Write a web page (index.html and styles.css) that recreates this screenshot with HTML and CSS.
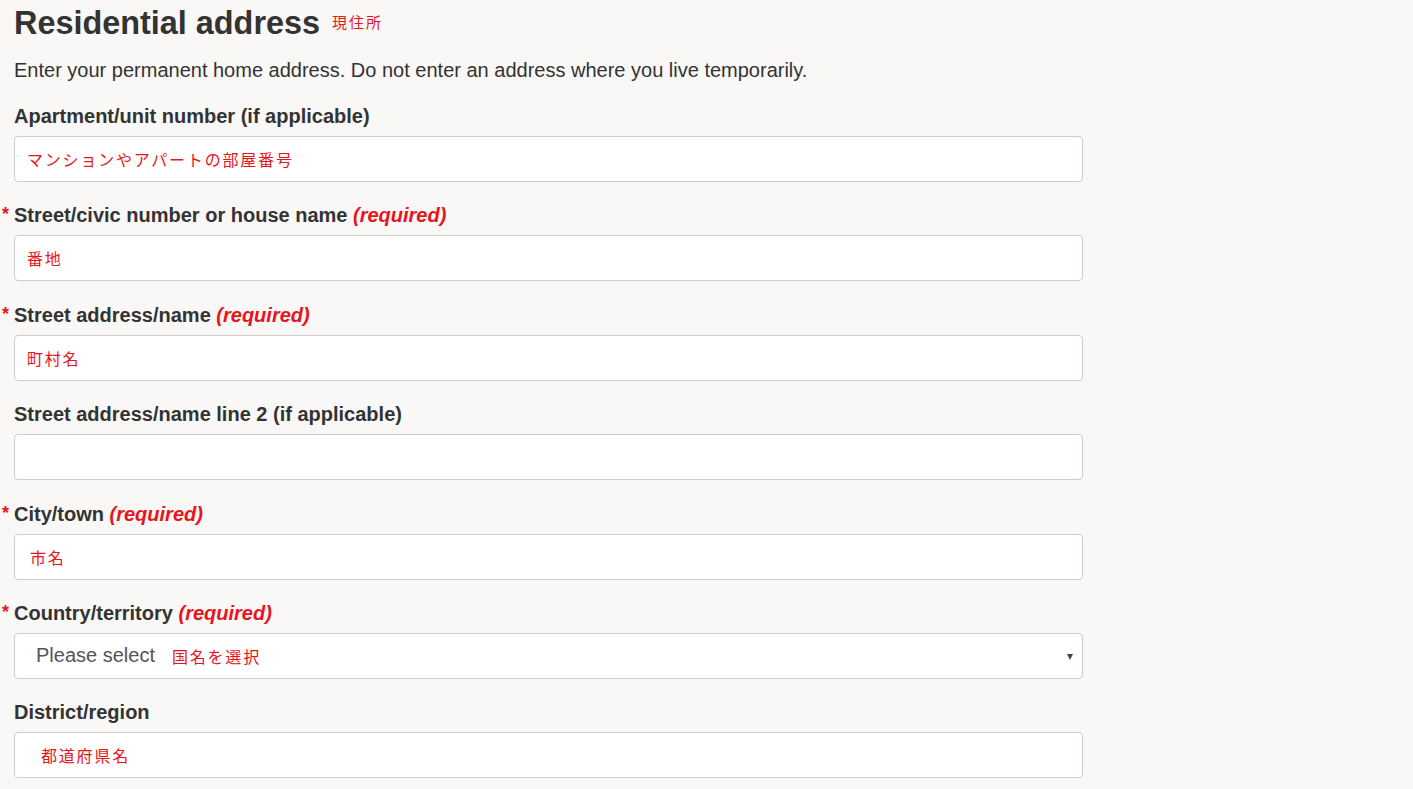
FILE: index.html
```html
<!DOCTYPE html>
<html lang="en">
<head>
<meta charset="utf-8">
<title>Residential address</title>
<link rel="stylesheet" href="styles.css">
</head>
<body>
<main class="page">
  <h1 class="title">Residential address <span class="jp jp-title">現住所</span></h1>
  <p class="intro">Enter your permanent home address. Do not enter an address where you live temporarily.</p>

  <div class="field">
    <label class="label">Apartment/unit number (if applicable)</label>
    <div class="input"><span class="jp">マンションやアパートの部屋番号</span></div>
  </div>

  <div class="field">
    <label class="label req">Street/civic number or house name <em class="required">(required)</em></label>
    <div class="input"><span class="jp">番地</span></div>
  </div>

  <div class="field">
    <label class="label req">Street address/name <em class="required">(required)</em></label>
    <div class="input"><span class="jp">町村名</span></div>
  </div>

  <div class="field">
    <label class="label">Street address/name line 2 (if applicable)</label>
    <div class="input"></div>
  </div>

  <div class="field">
    <label class="label req">City/town <em class="required">(required)</em></label>
    <div class="input"><span class="jp jp-city">市名</span></div>
  </div>

  <div class="field">
    <label class="label req">Country/territory <em class="required">(required)</em></label>
    <div class="input select"><span class="placeholder">Please select</span><span class="jp">国名を選択</span><span class="caret"></span></div>
  </div>

  <div class="field">
    <label class="label">District/region</label>
    <div class="input"><span class="jp jp-indent">都道府県名</span></div>
  </div>
</main>
</body>
</html>
```

FILE: styles.css
```css
html, body {
  margin: 0;
  padding: 0;
  background: #f9f8f7;
}
body {
  font-family: "Liberation Sans", Arial, sans-serif;
  color: #333;
}
.page {
  padding: 0 0 0 14px;
  width: 1069px;
}
.title {
  margin: 0;
  padding-top: 2px;
  font-size: 32.4px;
  line-height: 40px;
  font-weight: bold;
  color: #333;
}
.jp {
  font-family: "Noto Sans CJK JP", sans-serif;
  color: #e8141c;
  font-weight: normal;
  font-size: 16px;
  letter-spacing: 1.8px;
}
.jp-title {
  font-size: 15px;
  margin-left: 3px;
  vertical-align: 6px;
  letter-spacing: 2px;
}
.intro {
  margin: 13px 0 0 0;
  font-size: 20px;
  line-height: 28px;
}
.field {
  margin-top: 18px;
}
.field + .field {
  margin-top: 19.4px;
}
.label {
  display: block;
  position: relative;
  font-size: 20px;
  line-height: 28px;
  font-weight: bold;
  margin-bottom: 6px;
}
.label.req::before {
  content: "*";
  position: absolute;
  left: -12px;
  top: -1px;
  color: #e8141c;
  font-size: 18px;
}
.required {
  color: #e8141c;
  font-style: italic;
  font-weight: bold;
}
.input {
  box-sizing: border-box;
  height: 46px;
  border: 1px solid #cfcccb;
  border-radius: 4px;
  background: #fff;
  display: flex;
  align-items: center;
  padding-left: 12px;
  position: relative;
}
.jp-city { margin-left: 3px; }
.jp-indent { margin-left: 14px; }
.select .placeholder {
  color: #555;
  font-size: 20px;
  margin-left: 9px;
  margin-right: 17px;
}
.caret {
  position: absolute;
  right: 9px;
  top: 20px;
  width: 0;
  height: 0;
  border-left: 3px solid transparent;
  border-right: 3px solid transparent;
  border-top: 6px solid #444;
}
```
